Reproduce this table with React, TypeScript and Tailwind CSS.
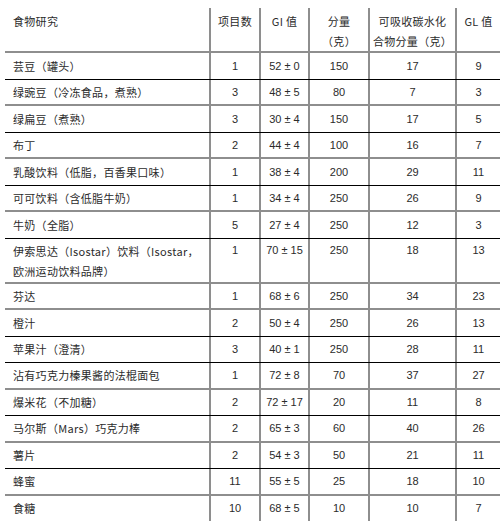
const rows: { name: React.ReactNode; n: string; gi: string; amt: string; carb: string; gl: string; line: "black" | "gray" | "none"; tall?: boolean }[] = [
  { name: "芸豆（罐头）", n: "1", gi: "52 ± 0", amt: "150", carb: "17", gl: "9", line: "black" },
  { name: "绿豌豆（冷冻食品，煮熟）", n: "3", gi: "48 ± 5", amt: "80", carb: "7", gl: "3", line: "gray" },
  { name: "绿扁豆（煮熟）", n: "3", gi: "30 ± 4", amt: "150", carb: "17", gl: "5", line: "black" },
  { name: "布丁", n: "2", gi: "44 ± 4", amt: "100", carb: "16", gl: "7", line: "gray" },
  { name: "乳酸饮料（低脂，百香果口味）", n: "1", gi: "38 ± 4", amt: "200", carb: "29", gl: "11", line: "black" },
  { name: "可可饮料（含低脂牛奶）", n: "1", gi: "34 ± 4", amt: "250", carb: "26", gl: "9", line: "gray" },
  { name: "牛奶（全脂）", n: "5", gi: "27 ± 4", amt: "250", carb: "12", gl: "3", line: "black" },
  {
    name: (
      <>
        伊索思达（Isostar）饮料（Isostar，
        <br />
        欧洲运动饮料品牌）
      </>
    ),
    n: "1", gi: "70 ± 15", amt: "250", carb: "18", gl: "13", line: "gray", tall: true,
  },
  { name: "芬达", n: "1", gi: "68 ± 6", amt: "250", carb: "34", gl: "23", line: "gray" },
  { name: "橙汁", n: "2", gi: "50 ± 4", amt: "250", carb: "26", gl: "13", line: "black" },
  { name: "苹果汁（澄清）", n: "3", gi: "40 ± 1", amt: "250", carb: "28", gl: "11", line: "black" },
  { name: "沾有巧克力榛果酱的法棍面包", n: "1", gi: "72 ± 8", amt: "70", carb: "37", gl: "27", line: "gray" },
  { name: "爆米花（不加糖）", n: "2", gi: "72 ± 17", amt: "20", carb: "11", gl: "8", line: "black" },
  { name: "马尔斯（Mars）巧克力棒", n: "2", gi: "65 ± 3", amt: "60", carb: "40", gl: "26", line: "gray" },
  { name: "薯片", n: "2", gi: "54 ± 3", amt: "50", carb: "21", gl: "11", line: "black" },
  { name: "蜂蜜", n: "11", gi: "55 ± 5", amt: "25", carb: "18", gl: "10", line: "gray" },
  { name: "食糖", n: "10", gi: "68 ± 5", amt: "10", carb: "10", gl: "7", line: "none" },
];

const cjk = "font-['Noto_Sans_CJK_SC','Noto_Sans',sans-serif]";
const num = "font-['Liberation_Sans','Noto_Sans_CJK_SC',sans-serif]";
const cols = "grid grid-cols-[204px_50px_49px_60px_87px_45px]";
const vcell = "border-l-2 border-[#8e8e8e] flex items-center justify-center";

export default function App() {
  return (
    <div className="min-h-screen bg-white pl-[5px] pt-[8px] text-[#2b2b2b]">
      <div className="w-[495px]">
        {/* Header */}
        <div className={`${cols} h-[45px] border-b-2 border-[#8e8e8e] text-[11px] leading-[20px] tracking-[0.3px] ${cjk}`}>
          <div className="pl-2 pt-[3px]">食物研究</div>
          <div className="border-l-2 border-[#8e8e8e] pt-[3px] text-center">项目数</div>
          <div className="border-l-2 border-[#8e8e8e] pt-[3px] text-center">GI 值</div>
          <div className="border-l-2 border-[#8e8e8e] pt-[3px] text-center">
            分量
            <br />
            （克）
          </div>
          <div className="border-l-2 border-[#8e8e8e] pt-[3px] text-center">
            可吸收碳水化
            <br />
            合物分量（克）
          </div>
          <div className="border-l-2 border-[#8e8e8e] pt-[3px] text-center">GL 值</div>
        </div>

        {/* Body */}
        {rows.map((r, i) => (
          <div
            key={i}
            className={`${cols} ${
              r.tall ? "h-[45px]" : r.line === "none" ? "h-[25px]" : "h-[26.5px]"
            } ${
              r.line === "black"
                ? "border-b border-black"
                : r.line === "gray"
                  ? "border-b-2 border-[#8e8e8e]"
                  : ""
            }`}
          >
            <div
              className={`pl-2 text-[11px] leading-[20px] tracking-[0.3px] ${cjk} ${
                r.tall ? "pt-[2px]" : "flex items-center"
              }`}
            >
              <span>{r.name}</span>
            </div>
            <div className={`${vcell} text-[11px] ${num} ${r.tall ? "items-start pt-[3px]" : ""}`}>{r.n}</div>
            <div className={`${vcell} text-[11px] ${num} ${r.tall ? "items-start pt-[3px]" : ""}`}>{r.gi}</div>
            <div className={`${vcell} text-[11px] ${num} ${r.tall ? "items-start pt-[3px]" : ""}`}>{r.amt}</div>
            <div className={`${vcell} text-[11px] ${num} ${r.tall ? "items-start pt-[3px]" : ""}`}>{r.carb}</div>
            <div className={`${vcell} text-[11px] ${num} ${r.tall ? "items-start pt-[3px]" : ""}`}>{r.gl}</div>
          </div>
        ))}
      </div>
    </div>
  );
}
